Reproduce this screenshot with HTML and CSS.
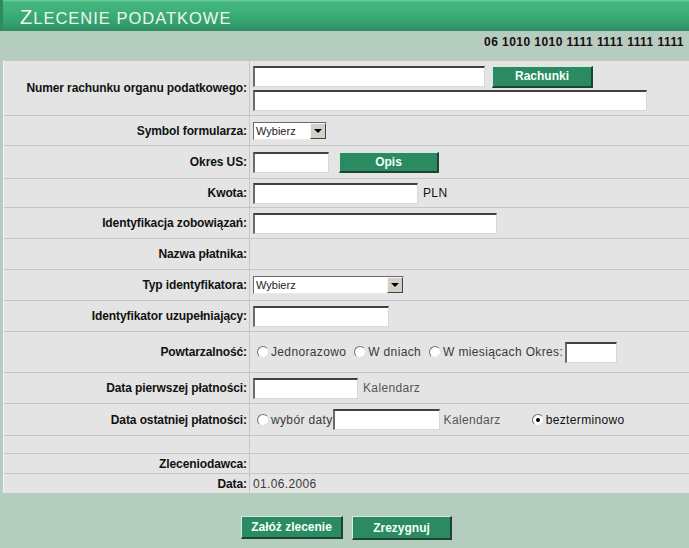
FILE: index.html
```html
<!DOCTYPE html>
<html lang="pl">
<head>
<meta charset="utf-8">
<title>Zlecenie podatkowe</title>
<link rel="stylesheet" href="styles.css">
</head>
<body>
<div class="header"><h1 class="title"><span class="big">Z</span>LECENIE PODATKOWE</h1></div>
<div class="acct"><span class="acct-no">06 1010 1010 1111 1111 1111 1111</span></div>
<div class="form">
  <div class="row r1">
    <div class="lbl">Numer rachunku organu podatkowego:</div>
    <div class="val col">
      <div class="line"><span class="inp w-acc"></span><span class="btn b-rach">Rachunki</span></div>
      <span class="inp w-acc2"></span>
    </div>
  </div>
  <div class="row r2">
    <div class="lbl">Symbol formularza:</div>
    <div class="val"><span class="sel w-sym"><span class="sel-t">Wybierz</span><span class="arr"></span></span></div>
  </div>
  <div class="row r3">
    <div class="lbl">Okres US:</div>
    <div class="val"><span class="inp w-okres"></span><span class="btn b-opis">Opis</span></div>
  </div>
  <div class="row r4">
    <div class="lbl">Kwota:</div>
    <div class="val"><span class="inp w-kwota"></span><span class="txt dark pln">PLN</span></div>
  </div>
  <div class="row r5">
    <div class="lbl">Identyfikacja zobowiązań:</div>
    <div class="val"><span class="inp w-ident"></span></div>
  </div>
  <div class="row r6">
    <div class="lbl">Nazwa płatnika:</div>
    <div class="val"></div>
  </div>
  <div class="row r7">
    <div class="lbl">Typ identyfikatora:</div>
    <div class="val"><span class="sel w-typ"><span class="sel-t">Wybierz</span><span class="arr"></span></span></div>
  </div>
  <div class="row r8">
    <div class="lbl">Identyfikator uzupełniający:</div>
    <div class="val"><span class="inp w-uzup"></span></div>
  </div>
  <div class="row r9">
    <div class="lbl">Powtarzalność:</div>
    <div class="val">
      <span class="radio first"></span><span class="txt opt">Jednorazowo</span>
      <span class="radio"></span><span class="txt opt">W dniach</span>
      <span class="radio"></span><span class="txt okres">W miesiącach Okres:</span>
      <span class="inp w-okr2"></span>
    </div>
  </div>
  <div class="row r10">
    <div class="lbl">Data pierwszej płatności:</div>
    <div class="val"><span class="inp w-date"></span><span class="txt kal">Kalendarz</span></div>
  </div>
  <div class="row r11">
    <div class="lbl">Data ostatniej płatności:</div>
    <div class="val">
      <span class="radio first"></span><span class="txt">wybór daty</span><span class="inp w-date2"></span><span class="txt kal2">Kalendarz</span>
      <span class="radio on"></span><span class="txt dark">bezterminowo</span>
    </div>
  </div>
  <div class="row r12">
    <div class="lbl"></div>
    <div class="val"></div>
  </div>
  <div class="row r13">
    <div class="lbl">Zleceniodawca:</div>
    <div class="val"></div>
  </div>
  <div class="row r14">
    <div class="lbl">Data:</div>
    <div class="val"><span class="txt">01.06.2006</span></div>
  </div>
</div>
<div class="actions">
  <span class="btn b-zaloz">Załóż zlecenie</span>
  <span class="btn b-zrez">Zrezygnuj</span>
</div>
</body>
</html>
```
FILE: styles.css
```css
html, body {
  margin: 0;
  padding: 0;
}
body {
  background: #b4cdbf;
  font-family: "Liberation Sans", Arial, sans-serif;
  font-size: 12px;
  color: #111;
  width: 689px;
  height: 548px;
  overflow: hidden;
}
.header {
  height: 31px;
  box-sizing: border-box;
  background: linear-gradient(#6fd0a0 0, #45b67f 2px, #3db078 12px, #33a06c 24px, #2d9163 29px, #3f8a6a 31px);
  border-left: 3px solid #2e8a60;
  display: flex;
  align-items: center;
}
.title {
  margin: 0 0 0 17px;
  font-weight: normal;
  font-size: 16.5px;
  color: #eef6f0;
  letter-spacing: 1px;
  line-height: 1;
  padding-top: 3px;
}
.title .big {
  font-size: 20px;
}
.acct {
  height: 29px;
  display: flex;
  justify-content: flex-end;
  align-items: flex-start;
}
.acct-no {
  font-weight: bold;
  font-size: 12px;
  letter-spacing: 0.45px;
  margin-top: 4px;
  margin-right: 5px;
  padding-left: 4px;
  color: #111;
  background: #b9cbc1;
}
.form {
  margin-left: 3px;
  background: #e4e4e4;
  border-left: 1px solid #f4f4f4;
}
.row {
  display: grid;
  grid-template-columns: 246px 1fr;
  border-top: 1px solid #c6c6c6;
  box-sizing: border-box;
}
.lbl {
  font-weight: bold;
  text-align: right;
  padding-right: 2px;
  border-right: 1px solid #c6c6c6;
  display: flex;
  align-items: center;
  justify-content: flex-end;
  white-space: nowrap;
  color: #111;
  letter-spacing: -0.1px;
}
.val {
  display: flex;
  align-items: center;
  padding-left: 3px;
  white-space: nowrap;
}
.val.col {
  flex-direction: column;
  align-items: flex-start;
  justify-content: center;
  gap: 2px;
}
.line {
  display: flex;
  align-items: center;
}
.r1 { height: 55px; }
.r2 { height: 30px; }
.r3 { height: 33px; }
.r4 { height: 29px; }
.r5, .r6, .r7, .r8, .r10 { height: 31px; }
.r9 { height: 41px; }
.r11 { height: 32px; }
.r12 { height: 18px; }
.r13, .r14 { height: 20px; }

.inp {
  display: inline-block;
  height: 21px;
  box-sizing: border-box;
  background: #fff;
  border-style: solid;
  border-width: 2px 1px 1px 2px;
  border-color: #404040 #d8d8d8 #d8d8d8 #6a6a6a;
}
.w-acc { width: 232px; }
.w-acc2 { width: 394px; }
.w-okres { width: 76px; }
.w-kwota { width: 165px; }
.w-ident { width: 244px; }
.w-uzup { width: 136px; }
.w-okr2 { width: 52px; }
.w-date { width: 105px; }
.w-date2 { width: 107px; }

.btn {
  display: inline-flex;
  align-items: center;
  justify-content: center;
  box-sizing: border-box;
  background: #2b8a62;
  color: #f2fff8;
  font-weight: bold;
  font-size: 12px;
  border-style: solid;
  border-width: 1px 2px 2px 1px;
  border-color: #cfeee0 #1b4432 #1b4432 #cfeee0;
  height: 22px;
}
.b-rach { width: 101px; margin-left: 7px; }
.b-opis { width: 100px; margin-left: 10px; height: 21px; }

.sel {
  display: inline-flex;
  align-items: center;
  justify-content: space-between;
  height: 18px;
  box-sizing: border-box;
  background: #fff;
  border-style: solid;
  border-width: 1px;
  border-color: #6a6a6a #e8e8e8 #e8e8e8 #6a6a6a;
  font-size: 11px;
  color: #222;
}
.sel-t { padding-left: 2px; }
.w-sym { width: 74px; }
.w-typ { width: 151px; }
.arr {
  position: relative;
  width: 16px;
  height: 16px;
  box-sizing: border-box;
  background: #d4d0c8;
  border-style: solid;
  border-width: 1px;
  border-color: #f4f4f4 #404040 #404040 #f4f4f4;
}
.arr::after {
  content: "";
  position: absolute;
  left: 3px;
  top: 5px;
  border-left: 4px solid transparent;
  border-right: 4px solid transparent;
  border-top: 4px solid #000;
}
.txt {
  color: #3a3a3a;
  font-size: 12px;
  letter-spacing: 0.35px;
}
.txt.dark { color: #111; }
.pln { margin-left: 5px; }
.kal { margin-left: 5px; color: #555; }
.kal2 { margin-left: 4px; margin-right: 29px; color: #555; }
.radio {
  display: inline-block;
  width: 12px;
  height: 12px;
  box-sizing: border-box;
  border-radius: 50%;
  background: #fff;
  border-style: solid;
  border-width: 1px;
  border-color: #707070 #e0e0e0 #e0e0e0 #707070;
  margin: 0 2px 0 2px;
  position: relative;
}
.radio.first { margin-left: 4px; }
.opt { margin-right: 6px; }
.okres { margin-right: 2px; }
.radio.on::after {
  content: "";
  position: absolute;
  left: 3px;
  top: 3px;
  width: 4px;
  height: 4px;
  border-radius: 50%;
  background: #000;
}
.actions {
  display: flex;
  gap: 9px;
  padding: 23px 0 0 241px;
}
.b-zaloz { width: 102px; height: 23px; }
.b-zrez { width: 100px; height: 24px; }
```
